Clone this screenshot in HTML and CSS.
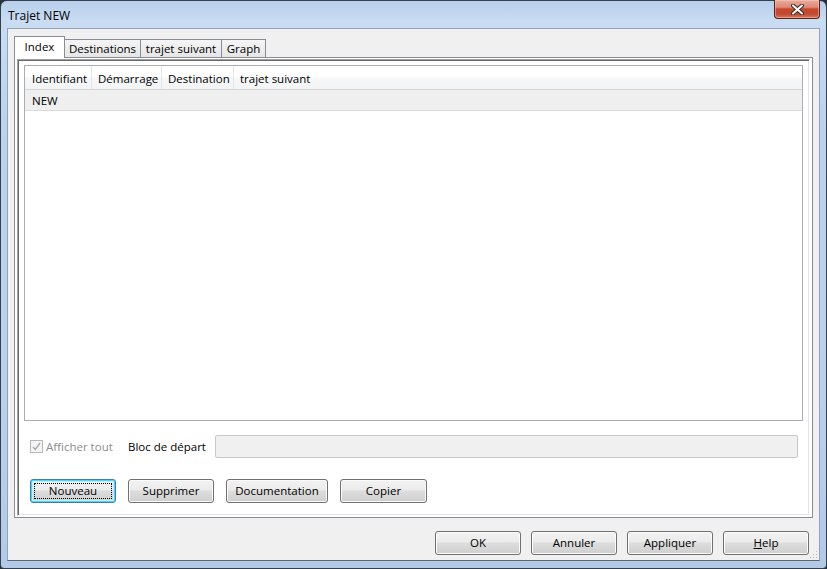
FILE: index.html
```html
<!DOCTYPE html>
<html lang="fr">
<head>
<meta charset="utf-8">
<title>Trajet NEW</title>
<link rel="stylesheet" href="styles.css">
</head>
<body>
<div class="window">
  <div class="titlebar">
    <span class="title">Trajet NEW</span>
    <div class="close">
      <svg width="13" height="11" viewBox="0 0 13 11">
        <path d="M2 1.5 L11 9.5 M11 1.5 L2 9.5" stroke="#3a2a28" stroke-width="4" stroke-linecap="round"/>
        <path d="M2 1.5 L11 9.5 M11 1.5 L2 9.5" stroke="#ffffff" stroke-width="2" stroke-linecap="round"/>
      </svg>
    </div>
  </div>
  <div class="client">
    <div class="tabs">
      <div class="tab active t-index">Index</div>
      <div class="tab t-dest">Destinations</div>
      <div class="tab t-suiv">trajet suivant</div>
      <div class="tab t-graph">Graph</div>
    </div>
    <div class="panel">
      <div class="sunken">
        <div class="listview">
          <div class="lv-header">
            <div class="col c1">Identifiant</div>
            <div class="col c2">Démarrage</div>
            <div class="col c3">Destination</div>
            <div class="col c4">trajet suivant</div>
          </div>
          <div class="lv-row selected">
            <div class="cell">NEW</div>
          </div>
        </div>
        <div class="options">
          <label class="check">
            <span class="box">
              <svg width="11" height="11" viewBox="0 0 11 11"><path d="M2 6 L4.3 8.5 L9 2" fill="none" stroke="#a9a9a9" stroke-width="1.4"/></svg>
            </span>
            <span class="check-label">Afficher tout</span>
          </label>
          <span class="field-label">Bloc de départ</span>
          <div class="field"></div>
        </div>
        <div class="actions">
          <button class="btn focus w86">Nouveau</button>
          <button class="btn w86">Supprimer</button>
          <button class="btn w102">Documentation</button>
          <button class="btn w87">Copier</button>
        </div>
      </div>
    </div>
    <div class="footer">
      <button class="btn w86 tall">OK</button>
      <button class="btn w86 tall">Annuler</button>
      <button class="btn w86 tall">Appliquer</button>
      <button class="btn w86 tall"><u>H</u>elp</button>
    </div>
    <svg class="grip" width="8" height="8" viewBox="0 0 8 8">
      <rect x="6" y="0" width="1" height="1" fill="#b8b8b8"/>
      <rect x="3" y="3" width="1" height="1" fill="#b8b8b8"/>
      <rect x="6" y="3" width="1" height="1" fill="#b8b8b8"/>
      <rect x="0" y="6" width="1" height="1" fill="#b8b8b8"/>
      <rect x="3" y="6" width="1" height="1" fill="#b8b8b8"/>
      <rect x="6" y="6" width="1" height="1" fill="#b8b8b8"/>
    </svg>
  </div>
</div>
</body>
</html>
```

FILE: styles.css
```css
* { box-sizing: border-box; }
html, body { margin: 0; padding: 0; }
body {
  width: 827px;
  height: 569px;
  overflow: hidden;
  background: #27313b;
  font-family: "Open Sans", "Noto Sans", sans-serif;
  font-size: 11.5px;
  color: #000;
}

.window {
  width: 827px;
  height: 569px;
  border: 1px solid #36404c;
  border-radius: 7px 7px 4px 4px;
  background: linear-gradient(to bottom, #b7cfeb 0, #c9dcf2 20px, #bcd3ee 120px, #bad1ec 400px, #b2cae8 100%);
  padding: 0 6px 7px 6px;
  display: flex;
  flex-direction: column;
}

.titlebar {
  height: 27px;
  margin: 0 -6px;
  padding-left: 7px;
  padding-right: 6px;
  display: flex;
  align-items: center;
  justify-content: space-between;
  flex-shrink: 0;
}
.title {
  font-size: 12px;
  margin-top: 2px;
}
.close {
  align-self: flex-start;
  width: 46px;
  height: 19px;
  margin-top: -1px;
  border: 1px solid #5a2118;
  border-top: none;
  border-radius: 0 0 4px 4px;
  background: linear-gradient(to bottom, #e9ab9b 0, #dc8a76 40%, #c7472e 50%, #c04a31 78%, #d9765a 100%);
  box-shadow: inset 0 0 0 1px rgba(255, 210, 200, 0.45);
  display: flex;
  align-items: center;
  justify-content: center;
}

.client {
  position: relative;
  flex: 1;
  background: #f0f0f0;
  border: 1px solid #8ea3bd;
  border-bottom-color: #5d6670;
  display: flex;
  flex-direction: column;
}

.tabs {
  display: flex;
  align-items: flex-end;
  height: 21px;
  margin: 7px 0 0 6px;
  position: relative;
  z-index: 1;
}
.tab {
  height: 18px;
  border: 1px solid #898c95;
  border-bottom: none;
  margin-left: -1px;
  background: linear-gradient(to bottom, #f5f5f5, #e6e6e6);
  display: flex;
  align-items: center;
  justify-content: center;
}
.tab.active {
  height: 22px;
  margin-left: 0;
  margin-bottom: -1px;
  background: #fff;
  position: relative;
  z-index: 2;
  padding-bottom: 2px;
}
.t-index { width: 51px; }
.t-dest { width: 77px; }
.t-suiv { width: 82px; }
.t-graph { width: 45px; }

.panel {
  height: 461px;
  margin: 0 6px;
  border: 1px solid #898c95;
  background: #fff;
  padding: 1px 2px;
  flex-shrink: 0;
}
.sunken {
  height: 100%;
  border-top: 1px solid #a0a0a0;
  border-left: 1px solid #a0a0a0;
  border-right: 1px solid #ffffff;
  border-bottom: 1px solid #ffffff;
  box-shadow: inset 1px 1px 0 #696969, inset -1px -1px 0 #e3e3e3;
  background: #fff;
  padding: 5px 6px 0 6px;
  display: flex;
  flex-direction: column;
}

.listview {
  height: 356px;
  border: 1px solid #abadb3;
  background: #fff;
  flex-shrink: 0;
}
.lv-header {
  height: 24px;
  display: flex;
  border-bottom: 1px solid #d5d5d5;
  background: linear-gradient(to bottom, #ffffff 0, #ffffff 45%, #f6f7f9 55%, #f3f4f6 100%);
}
.col {
  display: flex;
  align-items: center;
  padding-left: 6px;
  padding-top: 2px;
  border-right: 1px solid #e3e4e6;
}
.c1 { width: 67px; padding-left: 7px; }
.c2 { width: 70px; }
.c3 { width: 72px; }
.c4 { flex: 1; border-right: none; }

.lv-row {
  height: 21px;
  display: flex;
  align-items: center;
  padding-left: 7px;
  padding-top: 1px;
}
.lv-row.selected {
  background: #efefef;
  border-bottom: 1px solid #dadada;
}

.options {
  height: 23px;
  margin-top: 14px;
  padding: 0 5px 0 6px;
  display: flex;
  align-items: center;
}
.check {
  width: 98px;
  display: flex;
  align-items: center;
}
.box {
  width: 13px;
  height: 13px;
  border: 1px solid #b7b7b7;
  background: #f4f4f4;
  display: flex;
  align-items: center;
  justify-content: center;
}
.check-label {
  margin-left: 3px;
  color: #8d8d8d;
}
.field-label {
  width: 87px;
}
.field {
  flex: 1;
  height: 23px;
  border: 1px solid #c8c8c8;
  border-radius: 2px;
  background: #f0f0f0;
}

.actions {
  margin-top: 21px;
  padding-left: 6px;
  display: flex;
  gap: 12px;
}

.btn {
  position: relative;
  height: 24px;
  padding: 0 0 1px 0;
  border: 1px solid #707070;
  border-radius: 3px;
  background: linear-gradient(to bottom, #f2f2f2 0, #ebebeb 45%, #dddddd 50%, #cfcfcf 100%);
  box-shadow: inset 0 0 0 1px #fbfbfb;
  font-family: inherit;
  font-size: inherit;
  color: #000;
  display: flex;
  align-items: center;
  justify-content: center;
}
.btn.focus {
  border-color: #3c7fb1;
  box-shadow: inset 0 0 0 1px #48d7fb, inset 0 0 0 2px #c4edfb;
}
.btn.focus::after {
  content: "";
  position: absolute;
  left: 3px;
  top: 3px;
  right: 3px;
  bottom: 3px;
  border: 1px dotted #000;
}
.w86 { width: 86px; }
.w87 { width: 87px; }
.w102 { width: 102px; }

.footer {
  margin-top: 13px;
  padding-right: 10px;
  display: flex;
  justify-content: flex-end;
  gap: 10px;
}

.grip {
  position: absolute;
  right: 1px;
  bottom: 1px;
}
```
